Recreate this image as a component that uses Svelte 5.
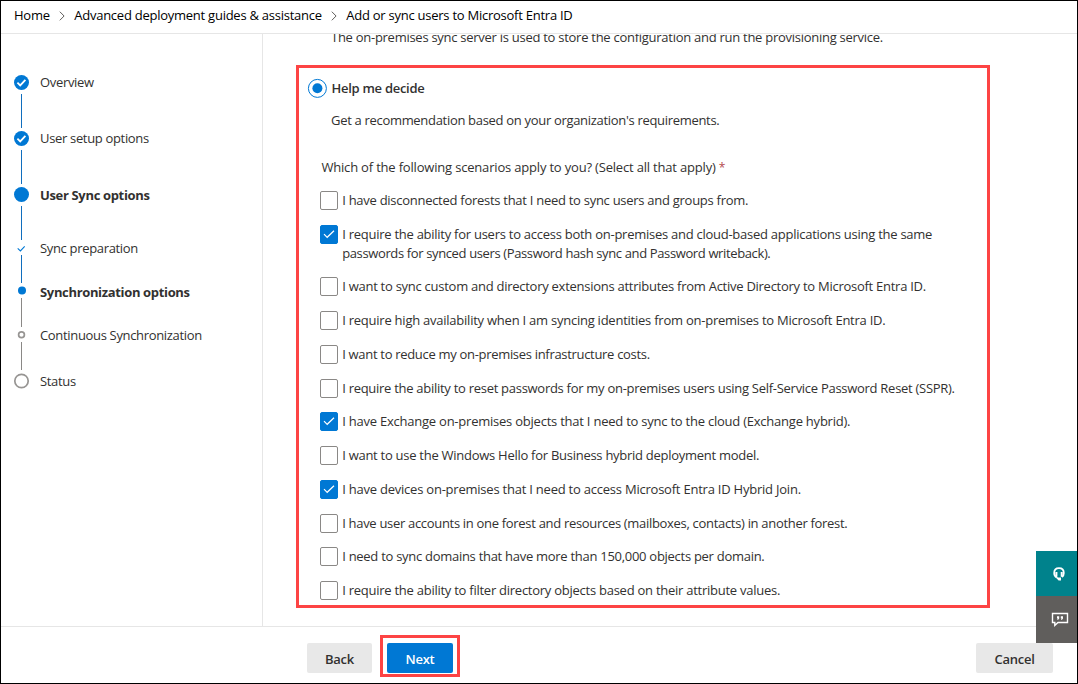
<script>
  const crumbs = [
    { label: 'Home' },
    { label: 'Advanced deployment guides & assistance' },
    { label: 'Add or sync users to Microsoft Entra ID' }
  ];

  const steps = [
    { label: 'Overview', kind: 'done', link: 34, nudge: -1 },
    { label: 'User setup options', kind: 'done', link: 34, nudge: -1 },
    { label: 'User Sync options', kind: 'current', link: 34, bold: true, nudge: 0 },
    { label: 'Sync preparation', kind: 'subdone', link: 28, sub: true, nudge: 1 },
    { label: 'Synchronization options', kind: 'subcurrent', link: 29, sub: true, bold: true, grey: true, nudge: 2 },
    { label: 'Continuous Synchronization', kind: 'subtodo', link: 28, sub: true, grey: true, nudge: 1 },
    { label: 'Status', kind: 'todo', link: 0, nudge: 0 }
  ];

  let scenarios = $state([
    { lines: [['I have disconnected forests that I need to sync users and groups from.', -0.275]], on: false },
    {
      lines: [
        ['I require the ability for users to access both on-premises and cloud-based applications using the same', -0.26],
        ['passwords for synced users (Password hash sync and Password writeback).', -0.37]
      ],
      on: true
    },
    { lines: [['I want to sync custom and directory extensions attributes from Active Directory to Microsoft Entra ID.', -0.265]], on: false },
    { lines: [['I require high availability when I am syncing identities from on-premises to Microsoft Entra ID.', -0.24]], on: false },
    { lines: [['I want to reduce my on-premises infrastructure costs.', -0.31]], on: false },
    { lines: [['I require the ability to reset passwords for my on-premises users using Self-Service Password Reset (SSPR).', -0.28]], on: false },
    { lines: [['I have Exchange on-premises objects that I need to sync to the cloud (Exchange hybrid).', -0.23]], on: true },
    { lines: [['I want to use the Windows Hello for Business hybrid deployment model.', -0.27]], on: false },
    { lines: [['I have devices on-premises that I need to access Microsoft Entra ID Hybrid Join.', -0.225]], on: true },
    { lines: [['I have user accounts in one forest and resources (mailboxes, contacts) in another forest.', -0.31]], on: false },
    { lines: [['I need to sync domains that have more than 150,000 objects per domain.', -0.28]], on: false },
    { lines: [['I require the ability to filter directory objects based on their attribute values.', -0.255]], on: false }
  ]);
</script>

<div class="page">
  <nav class="crumbs">
    {#each crumbs as crumb, i}
      {#if i > 0}
        <svg class="chev" width="6" height="10" viewBox="0 0 6 10"><path d="M.8.7 5.1 5 .8 9.3" /></svg>
      {/if}
      <span>{crumb.label}</span>
    {/each}
  </nav>

  <div class="body">
    <ol class="steps">
      {#each steps as step}
        <li>
          <div class="row" class:sub={step.sub}>
            <svg class="mark" width="16" height="16" viewBox="0 0 16 16">
              {#if step.kind === 'done'}
                <circle cx="8.5" cy="7.5" r="7.5" class="blue" />
                <path d="M4.4 7.7 7.2 10.4 12.4 4.8" class="tick" />
              {:else if step.kind === 'current'}
                <circle cx="8.5" cy="7.5" r="7.5" class="blue" />
              {:else if step.kind === 'subdone'}
                <path d="M4.7 8.4 7.4 10.9 11.7 6.4" class="smalltick" />
              {:else if step.kind === 'subcurrent'}
                <circle cx="9" cy="7.5" r="4" class="blue" />
              {:else if step.kind === 'subtodo'}
                <circle cx="8.5" cy="7.8" r="2.9" class="ring" />
              {:else}
                <circle cx="8.5" cy="8" r="6.7" class="ring" />
              {/if}
            </svg>
            <span class="name" class:bold={step.bold} style:top="{step.nudge}px">{step.label}</span>
          </div>
          {#if step.link}
            <div class="link" class:grey={step.grey} style:height="{step.link}px"></div>
          {/if}
        </li>
      {/each}
    </ol>

    <main>
      <p class="lead">The on-premises sync server is used to store the configuration and run the provisioning service.</p>
      <section class="decide">
        <div class="choice">
          <svg width="20" height="20" viewBox="0 0 20 20">
            <circle cx="10.4" cy="10.4" r="9" fill="none" stroke="#0078d4" />
            <circle cx="10.4" cy="10.2" r="5" class="blue" />
          </svg>
          <span class="semi">Help me decide</span>
        </div>
        <p class="desc">Get a recommendation based on your organization's requirements.</p>
        <p class="question">Which of the following scenarios apply to you? (Select all that apply) <span class="req">*</span></p>
        <div class="list">
          {#each scenarios as item}
            <button class="item" role="checkbox" aria-checked={item.on} onclick={() => (item.on = !item.on)}>
              <span class="box" class:on={item.on}>
                {#if item.on}
                  <svg width="12" height="9" viewBox="0 0 12 9"><path d="M1 4.1 4.2 7.3 11 .7" /></svg>
                {/if}
              </span>
              <span class="label">
                {#each item.lines as [text, track]}<span class="line" style:letter-spacing="{track}px">{text}</span>{/each}
              </span>
            </button>
          {/each}
        </div>
      </section>
    </main>
  </div>

  <footer>
    <button class="btn back">Back</button>
    <div class="frame"><button class="btn next">Next</button></div>
    <button class="btn cancel">Cancel</button>
  </footer>

  <aside>
    <div class="help">
      <svg width="12" height="14" viewBox="0 0 12 14">
        <path d="M3.6 10.4C1.9 9.4 1.2 7.8 1.2 6 1.2 3 3.2 1.2 6 1.2s4.8 1.8 4.8 4.8c0 1.7-.6 3.1-1.8 4" fill="none" stroke="#fff" stroke-width="1.8" />
        <path d="M2.4 5h2v4.8h-2zM7.7 5h2v4.8h-2zM3.2 9.4l1.8 1h3v3H5.6L3.2 11z" fill="#fff" />
      </svg>
    </div>
    <div class="feedback">
      <svg width="18" height="15" viewBox="0 0 18 15">
        <path d="M1.5 1.5h15v9H7L3.8 13.4v-2.9H1.5z" fill="none" stroke="#fff" stroke-width="1.4" />
        <path d="M6 4.2h2.2v2.3L7 8H6.3l.5-1.5H6zM9.8 4.2H12v2.3L10.8 8h-.7l.5-1.5h-.8z" fill="#fff" />
      </svg>
    </div>
  </aside>
</div>

<style>
  :global(body) { margin: 0; background: #fff; }
  * { box-sizing: border-box; }
  .page {
    position: relative;
    width: 1078px;
    height: 684px;
    border: 1px solid #000;
    display: grid;
    grid-template-rows: 33px 592px 1fr;
    font-family: 'Open Sans', 'Noto Sans', sans-serif;
    font-size: 13px;
    letter-spacing: -0.25px;
    line-height: 19px;
    color: #323130;
    overflow: hidden;
    white-space: nowrap;
  }
  p, ol { margin: 0; padding: 0; }
  .crumbs {
    display: flex;
    align-items: center;
    padding: 0 0 3px 13px;
    border-bottom: 1px solid #e6e6e6;
    color: #000;
  }
  .chev { margin: 0 9.7px 0 8.8px; fill: none; stroke: #605e5c; stroke-width: 1; }
  .body { display: grid; grid-template-columns: 262px 1fr; overflow: hidden; }
  .steps { list-style: none; padding: 38px 0 0 12px; border-right: 1px solid #e6e6e6; }
  .row { display: flex; align-items: center; height: 22px; gap: 11px; }
  .row.sub { height: 15px; }
  .mark { flex: none; overflow: visible; }
  .name { position: relative; letter-spacing: -0.33px; }
  .link { width: 1px; margin-left: 8px; background: #106ebe; }
  .link.grey { background: #8a8886; }
  .blue { fill: #0078d4; }
  .tick { fill: none; stroke: #fff; stroke-width: 1.8; }
  .smalltick { fill: none; stroke: #0078d4; stroke-width: 1.1; }
  .ring { fill: none; stroke: #979593; stroke-width: 1.7; }
  .bold { font-weight: 700; letter-spacing: -0.34px; }
  .semi { font-weight: 600; letter-spacing: -0.28px; }
  main { padding-left: 33px; overflow: hidden; }
  .lead { margin-top: -6px; padding-left: 35px; height: 37px; letter-spacing: -0.27px; }
  .decide { width: 694px; height: 543px; border: 3px solid #fd4444; padding: 10px 0 0 8px; }
  .choice { display: flex; align-items: center; gap: 4.5px; height: 20px; }
  .desc { padding: 13px 0 0 24px; letter-spacing: -0.31px; }
  .question { padding: 28px 0 0 14.4px; letter-spacing: -0.185px; }
  .req { color: #b3484d; font-size: 12px; }
  .list { display: flex; flex-direction: column; gap: 14.77px; padding: 14px 0 0 13px; }
  .item {
    display: flex;
    gap: 4.2px;
    padding: 0;
    border: 0;
    background: none;
    font: inherit;
    letter-spacing: inherit;
    color: inherit;
    text-align: left;
  }
  .box {
    flex: none;
    display: flex;
    align-items: center;
    justify-content: center;
    width: 18px;
    height: 19px;
    border: 1px solid #8a8886;
    border-radius: 2px;
  }
  .box.on { background: #0078d4; border-color: #0078d4; }
  .box path { fill: none; stroke: #fff; stroke-width: 1.2; }
  .line { display: block; height: 18.9px; }
  footer { display: flex; padding: 9px 24px 0 306px; border-top: 1px solid #e6e6e6; }
  .btn {
    height: 30px;
    padding: 2px 0 0;
    border: 0;
    border-radius: 2px;
    background: #e8e8e8;
    color: #323130;
    font: 600 13px/28px 'Open Sans', 'Noto Sans', sans-serif;
    letter-spacing: -0.25px;
  }
  .back { width: 65px; margin-top: 7px; }
  .frame { width: 80px; height: 42px; margin: -1px 0 0 8px; border: 3px solid #fd4444; padding: 5px 4px; }
  .next { display: block; width: 66px; background: #0078d4; color: #fff; }
  .cancel { width: 77px; margin: 7px 0 0 auto; }
  aside { position: absolute; right: 0; top: 550px; width: 41px; }
  aside div { display: flex; align-items: center; justify-content: center; }
  .help { height: 45px; background: #00828c; padding-left: 4px; }
  .feedback { height: 47px; background: #605e5c; padding-left: 7px; }
</style>
